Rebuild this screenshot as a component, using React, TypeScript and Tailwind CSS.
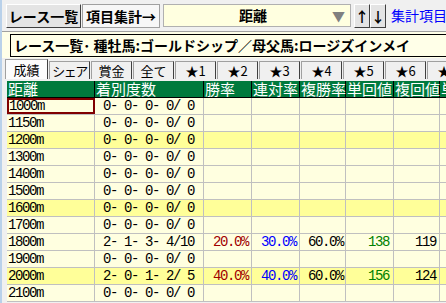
import React from 'react';

type Row = {
  d: string;
  c: string;
  hl?: boolean;
  sel?: boolean;
  w?: string;
  r?: string;
  f?: string;
  t?: string;
  p?: string;
};

const rows: Row[] = [
  { d: '1000m', c: '0- 0- 0- 0/ 0', sel: true },
  { d: '1150m', c: '0- 0- 0- 0/ 0' },
  { d: '1200m', c: '0- 0- 0- 0/ 0', hl: true },
  { d: '1300m', c: '0- 0- 0- 0/ 0' },
  { d: '1400m', c: '0- 0- 0- 0/ 0' },
  { d: '1500m', c: '0- 0- 0- 0/ 0' },
  { d: '1600m', c: '0- 0- 0- 0/ 0', hl: true },
  { d: '1700m', c: '0- 0- 0- 0/ 0' },
  { d: '1800m', c: '2- 1- 3- 4/10', w: '20.0%', r: '30.0%', f: '60.0%', t: '138', p: '119' },
  { d: '1900m', c: '0- 0- 0- 0/ 0' },
  { d: '2000m', c: '2- 0- 1- 2/ 5', hl: true, w: '40.0%', r: '40.0%', f: '60.0%', t: '156', p: '124' },
  { d: '2100m', c: '0- 0- 0- 0/ 0' },
];

const tabs = ['成績', 'シェア', '賞金', '全て', '★1', '★2', '★3', '★4', '★5', '★6', '★7'];

const heads = [
  { label: '距離', w: 'w-[88px]' },
  { label: '着別度数', w: 'w-[109px]' },
  { label: '勝率', w: 'w-[48px]' },
  { label: '連対率', w: 'w-[48px]' },
  { label: '複勝率', w: 'w-[46px]' },
  { label: '単回値', w: 'w-[48px]' },
  { label: '複回値', w: 'w-[46px]' },
  { label: '単回率', w: 'w-[60px]' },
];

const jp = 'font-["Noto_Sans_CJK_JP",sans-serif]';
const mono = 'font-["Liberation_Mono",monospace] text-[14px] tracking-[-1.4px] whitespace-pre';
const raised = 'bg-[#e4e4e4] border border-t-white border-l-white border-b-[#404040] border-r-[#404040]';

export default function App() {
  return (
    <div className={`w-[446px] h-[303px] overflow-hidden bg-[#f0f0f0] border-l-2 border-[#b9d1ea] ${jp}`}>
      {/* toolbar */}
      <div className="flex items-center h-[31px] pl-1 gap-[1px]">
        <button className={`shrink-0 h-[24px] w-[75px] ${raised} text-[14px] font-bold text-black leading-none whitespace-nowrap`}>
          レース一覧
        </button>
        <button className="shrink-0 h-[24px] w-[78px] bg-[#f7f7f7] border border-[#a0a0a0] text-[14px] font-bold text-black leading-none whitespace-nowrap">
          項目集計→
        </button>
        <div className="shrink-0 ml-[2px] h-[23px] w-[188px] bg-[#ffffe0] border border-[#b0b0b0] flex items-center">
          <span className="flex-1 text-center text-[14px] font-bold text-black pl-[10px]">距離</span>
          <span className="text-[#808080] text-[13px] pr-[5px]">▼</span>
        </div>
        <div className="shrink-0 ml-[2px] flex">
          <button className={`h-[24px] w-[16px] ${raised} text-[14px] font-bold leading-none`}>↑</button>
          <button className={`h-[24px] w-[16px] ${raised} text-[14px] font-bold leading-none`}>↓</button>
        </div>
        <span className="shrink-0 ml-[4px] text-[14px] text-[#0000ff] whitespace-nowrap">集計項目メモ</span>
      </div>

      {/* title */}
      <div className="h-[27px] border-t border-[#a0a0a0] bg-[#ffffe8] pl-[8px] pt-[2px]">
        <div className="h-[23px] border border-black border-r-0 flex items-center pl-[3px] text-[14px] font-bold text-black whitespace-nowrap">
          レース一覧･ 種牡馬:ゴールドシップ／母父馬:ロージズインメイ
        </div>
      </div>

      {/* tabs */}
      <div className="flex items-end h-[20px] pl-[3px] gap-[1px] mt-[1px]">
        {tabs.map((t, i) => (
          <div
            key={t}
            className={`shrink-0 flex items-center justify-center text-[13px] whitespace-nowrap text-black border border-b-0 border-[#a0a0a0] border-r-[#404040] ${
              i === 0 ? 'h-[20px] bg-[#fcfcfc] w-[43px]' : 'h-[18px] bg-[#f0f0f0] w-[41px]'
            } ${i === 1 ? 'tracking-[-1.5px]' : ''}`}
          >
            {t}
          </div>
        ))}
      </div>

      {/* grid */}
      <div className="ml-[5px] mt-[2px] w-[460px]">
        <div className="flex h-[17px] bg-[#007a3d] border-b border-black">
          {heads.map((h) => (
            <div key={h.label} className={`${h.w} shrink-0 border-r border-black text-white text-[15px] leading-[16px] pl-[1px] whitespace-nowrap`}>
              {h.label}
            </div>
          ))}
        </div>
        {rows.map((r) => (
          <div key={r.d} className={`flex h-[17px] border-b border-[#c0c0c0] ${r.hl ? 'bg-[#ffff99]' : 'bg-[#ffffe0]'}`}>
            {r.sel ? (
              <div className={`w-[88px] shrink-0 border-2 border-[#800000] ${mono} leading-[12px]`}>{r.d}</div>
            ) : (
              <div className={`w-[88px] shrink-0 border-r border-[#c0c0c0] ${mono} leading-[16px] pl-[1px]`}>{r.d}</div>
            )}
            <div className={`w-[109px] shrink-0 border-r border-[#c0c0c0] ${mono} leading-[16px] pl-[8px]`}>{r.c}</div>
            <div className={`w-[48px] shrink-0 border-r border-[#c0c0c0] ${mono} leading-[16px] text-right pr-[3px] text-[#a00000]`}>{r.w}</div>
            <div className={`w-[48px] shrink-0 border-r border-[#c0c0c0] ${mono} leading-[16px] text-right pr-[3px] text-[#0000ff]`}>{r.r}</div>
            <div className={`w-[46px] shrink-0 border-r border-[#c0c0c0] ${mono} leading-[16px] text-right pr-[2px] text-black`}>{r.f}</div>
            <div className={`w-[48px] shrink-0 border-r border-[#c0c0c0] ${mono} leading-[16px] text-right pr-[4px] text-[#008000]`}>{r.t}</div>
            <div className={`w-[46px] shrink-0 border-r border-[#c0c0c0] ${mono} leading-[16px] text-right pr-[3px] text-black`}>{r.p}</div>
            <div className="w-[60px] shrink-0"></div>
          </div>
        ))}
      </div>
    </div>
  );
}
